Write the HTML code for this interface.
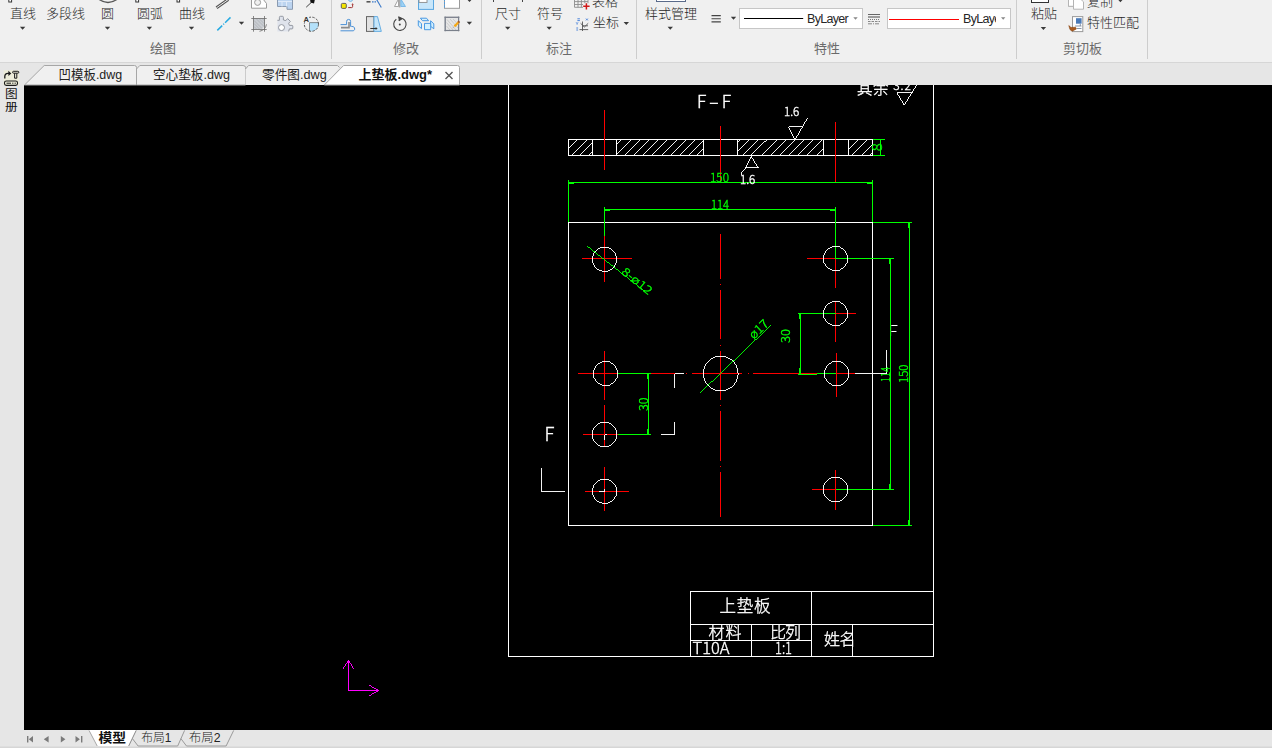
<!DOCTYPE html>
<html lang="zh-CN">
<head>
<meta charset="utf-8">
<title>上垫板.dwg</title>
<style>
html,body{margin:0;padding:0;}
body{width:1272px;height:748px;overflow:hidden;position:relative;background:#e6e6e6;
 font-family:"Liberation Sans","Noto Sans CJK SC",sans-serif;font-size:13px;color:#1e1e1e;}
#ribbon{position:absolute;left:0;top:0;width:1272px;height:62px;background:#f0f0f0;border-bottom:1px solid #d6d6d6;}
.t{position:absolute;white-space:nowrap;line-height:16px;height:16px;font-size:13px;color:#262626;font-weight:300;}
.lbl{position:absolute;white-space:nowrap;line-height:16px;height:16px;font-size:13px;color:#6a6a6a;}
.sep{position:absolute;top:0;width:1px;height:59px;background:#cdcdcd;}
.ar{position:absolute;width:0;height:0;border-left:2.6px solid transparent;border-right:2.6px solid transparent;border-top:3px solid #3a3a3a;}
.combo{position:absolute;top:8px;height:19px;background:#fff;border:1px solid #c6c6c6;}
#tabbar{position:absolute;left:0;top:63px;width:1272px;height:22px;background:#e6e6e6;}
#canvas{position:absolute;left:24px;top:85px;width:1248px;height:645px;background:#000;overflow:hidden;}
#left{position:absolute;left:0;top:85px;width:24px;height:645px;background:#e6e6e6;}
#bottom{position:absolute;left:0;top:730px;width:1272px;height:18px;background:#e6e6e6;}
#ov{position:absolute;left:0;top:0;width:1272px;height:748px;}
</style>
</head>
<body>
<div id="ribbon">
 <!-- draw panel -->
 <div class="t" style="left:10px;top:6px">直线</div>
 <div class="t" style="left:46px;top:6px">多段线</div>
 <div class="t" style="left:101px;top:6px">圆</div>
 <div class="t" style="left:137px;top:6px">圆弧</div>
 <div class="t" style="left:179px;top:6px">曲线</div>
 
 <div class="lbl" style="left:150px;top:41px">绘图</div>
 <div class="sep" style="left:331px"></div>
 <!-- modify panel -->
 
 <div class="lbl" style="left:393px;top:41px">修改</div>
 <div class="sep" style="left:481px"></div>
 <!-- annotate panel -->
 <div class="t" style="left:495px;top:6px">尺寸</div>
 <div class="t" style="left:537px;top:6px">符号</div>
 <div class="t" style="left:592px;top:-6.5px">表格</div>
 <div class="t" style="left:593px;top:15px">坐标</div>
 <div class="lbl" style="left:546px;top:41px">标注</div>
 <div class="sep" style="left:636px"></div>
 <!-- properties panel -->
 <div class="t" style="left:645px;top:6px">样式管理</div>
 
 <div class="combo" style="left:739px;width:122px"></div>
 <div class="t" style="left:807px;top:11px;font-size:12.5px;letter-spacing:-0.68px;font-weight:400">ByLayer</div>
 <div class="combo" style="left:887px;width:122px"></div>
 <div class="t" style="left:963px;top:11px;font-size:12.5px;letter-spacing:-0.68px;font-weight:400;width:32.5px;overflow:hidden">ByLayer</div>
 <div class="lbl" style="left:814px;top:41px">特性</div>
 <div class="sep" style="left:1016px"></div>
 <!-- clipboard panel -->
 <div class="t" style="left:1031px;top:6px">粘贴</div>
 <div class="t" style="left:1087px;top:-6.5px">复制</div>
 <div class="t" style="left:1087px;top:15px">特性匹配</div>
 <div class="lbl" style="left:1063px;top:41px">剪切板</div>
 <div class="sep" style="left:1147px"></div>
</div>
<div id="tabbar"></div>
<div id="left"></div>
<div id="canvas"></div>
<div id="bottom"></div>
<svg id="ov" width="1272" height="748" viewBox="0 0 1272 748">
<!--ICONS-->
<g fill="none" stroke-linecap="butt">
 <!-- draw panel: big icon stubs at top -->
 <rect x="8.8" y="-3" width="2.8" height="5" fill="#fff" stroke="#333" stroke-width="1"/>
 <path d="M98.5,-1 Q108,6 117.5,-1" stroke="#555" stroke-width="1.3"/>
 <rect x="135.8" y="-3" width="2.8" height="5" fill="#fff" stroke="#333" stroke-width="1"/>
 <rect x="177" y="-3" width="2.6" height="5" fill="#fff" stroke="#333" stroke-width="1"/>
 <!-- double line -->
 <path d="M216.5,7.8 L228.2,-0.5" stroke="#555" stroke-width="3"/>
 <path d="M216.5,7.8 L228.2,-0.5" stroke="#f0f0f0" stroke-width="1"/>
 <!-- blue dash-dot line -->
 <path d="M217.3,30.4 L222.2,25.6 M223.3,24.5 L224,23.8 M225.1,22.7 L230.5,17.4" stroke="#29abe2" stroke-width="1.5"/>
 <!-- top row icons (clipped) -->
 <path d="M251.5,-1 V8.2 H266.5 V3.5 L263,-1 Z" fill="#fff" stroke="#9a9a9a" stroke-width="1"/>
 <circle cx="257.6" cy="2.4" r="3" fill="#f0f0f0" stroke="#9a9a9a" stroke-width="1"/>
 <path d="M277.5,-1 V6.5 H287 V9.3 H292.5 V-1 Z" fill="#bcd4f0" stroke="#8a9ab0" stroke-width="1"/>
 <path d="M278,1.5 H292 M282,2 V6.5 M286.5,2 V6.5" stroke="#e8f0fb" stroke-width="0.8"/>
 <path d="M306.2,7.2 L312,1.8" stroke="#444" stroke-width="1"/>
 <path d="M310,-1 L315,-1 L314,3.5 L310.5,2.5 Z" fill="#111" stroke="none"/>
 <!-- hatch icon -->
 <path d="M253.5,18.2 H264.5 V24.5 Q264,29 259.5,29.5 H253.5 Z" fill="#c9cdd2" stroke="none"/>
 <path d="M254,20.5 L262,28.5 M254,23.5 L259.5,29 M254,26.5 L256.5,29 M256,18.5 L264,26.5 M259,18.5 L264.3,23.8 M262,18.5 L264.3,20.8" stroke="#a9adb3" stroke-width="0.7"/>
 <path d="M251.3,18.5 H266.7 M251.3,29.5 H266.7 M253.5,16 V31.7 M264.5,16 V31.7" stroke="#6a6a6a" stroke-width="0.8"/>
 <path d="M259.5,31.3 Q265.5,30 266.5,24.3" stroke="#777" stroke-width="0.9"/>
 <!-- gear / region icon -->
 <path d="M277.4,31.4 V20.3 H279.4 V17.3 Q279.4,16.3 280.4,16.3 H282.4 Q283.4,16.3 283.4,17.3 V20 L285.8,20.6 L287.6,18.6 L290.4,21.4 L288.6,23.2 L289.4,25.4 H292 Q292.8,25.4 292.8,26.2 V28.1 Q292.8,28.9 292,28.9 H289.4 L288.6,31.4 Z" fill="#dfe3ec" stroke="none"/>
 <path d="M277.4,20.3 H279.4 V17.3 Q279.4,16.3 280.4,16.3 H282.4 Q283.4,16.3 283.4,17.3 V20 L285.8,20.6 L287.6,18.6 L290.4,21.4 L288.6,23.2 L289.4,25.4 H292 Q292.8,25.4 292.8,26.2 V28.1 Q292.8,28.9 292,28.9 H289.4 L288.6,31.4" stroke="#8a8e98" stroke-width="0.9"/>
 <circle cx="281.5" cy="27.6" r="3" fill="#fff" stroke="#8a8e98" stroke-width="0.9"/>
 <!-- A circle icon -->
 <path d="M309.5,22.6 H318.4 A7.2,7.2 0 0 1 309.5,31.1 Z" fill="#b4e1fa" stroke="none"/>
 <path d="M309.5,31.1 V22.6 H318.4" stroke="#666" stroke-width="0.7"/>
 <circle cx="311.4" cy="24.2" r="7.1" stroke="#444" stroke-width="0.9" stroke-dasharray="2.4 1.4"/>
 <rect x="303.5" y="16.6" width="5.6" height="5.6" fill="#f0f0f0" stroke="none"/>
 <text x="303.6" y="21.7" font-size="7.6" font-weight="bold" fill="#333" stroke="none" style="font-family:'Liberation Sans',sans-serif">A</text>
 <!-- modify panel top row -->
 <rect x="341.3" y="3.4" width="5" height="5" rx="1.2" fill="#f5e600" stroke="#555" stroke-width="0.9"/>
 <path d="M347.5,-1 Q350.5,4 353.5,-1" fill="#bfe3f8" stroke="#6aaee0" stroke-width="0.8"/>
 <path d="M348.2,7.6 H351.6 Q352.6,7.6 352.6,6.6 V4.6" stroke="#a03030" stroke-width="1"/>
 <path d="M351.4,4.8 L352.6,3.2 L353.8,4.8 Z" fill="#a03030"/>
 <path d="M366.5,1.8 H370.5" stroke="#555" stroke-width="1.6"/>
 <path d="M372,1.8 H376" stroke="#3a78c8" stroke-width="1.2" stroke-dasharray="1.6 0.9"/>
 <path d="M376.6,-0.5 L381.3,7.5" stroke="#3a78c8" stroke-width="1.1"/>
 <path d="M394.5,6.5 L398.5,-1 V6.5 Z" fill="#fff" stroke="#9a9a9a" stroke-width="0.9"/>
 <path d="M399.6,-1 V7.5" stroke="#aaa" stroke-width="1.6"/>
 <path d="M400.8,-1 L405.5,6.5 H400.8 Z" fill="#9ed2f4" stroke="#6ab0e6" stroke-width="0.8"/>
 <rect x="418.5" y="-2" width="15" height="11.4" fill="#c8e6fa" stroke="#5aa7e0" stroke-width="1"/>
 <rect x="419" y="-2" width="8" height="4.4" fill="#fff" stroke="#8a8a8a" stroke-width="0.9"/>
 <rect x="444.5" y="-2" width="15" height="10.3" fill="#fff" stroke="#9a9a9a" stroke-width="1"/>
 <path d="M444.5,-1 V8" stroke="#4a9ae0" stroke-width="1" stroke-dasharray="2 1.2"/>
 <!-- modify panel bottom row -->
 <path d="M340.5,30.8 H353.5 Q355.6,29.4 354.3,27.4 Q353.5,26.4 351.5,26.4 H350.6 V21.5 Q350.6,19.4 348.6,19.4 Q346.6,19.4 346.6,21.5 V24.6 H340.5" stroke="#4a90d6" stroke-width="1"/>
 <path d="M341,27.6 H349 V22" stroke="#8a8a8a" stroke-width="1.6"/>
 <rect x="366.5" y="16.6" width="7.5" height="14.8" fill="#e2e2e2" stroke="#666" stroke-width="1"/>
 <path d="M374,16.6 H377.5 L381.3,31.4 H374 Z" fill="#c6e6fa" stroke="#5aa7e0" stroke-width="0.9"/>
 <path d="M370.3,28.5 H376" stroke="#333" stroke-width="1"/>
 <path d="M375.6,27 L377.6,28.5 L375.6,30 Z" fill="#333"/>
 <path d="M402.5,18.6 A6.2,6.2 0 1 1 396.3,19.2" stroke="#444" stroke-width="1.1"/>
 <path d="M398.3,16.8 L402.2,18.6 L398.8,20.8" stroke="#444" stroke-width="1.1" fill="#444"/>
 <circle cx="399.8" cy="24.4" r="1" fill="#444"/>
 <g fill="#d2f0ff" stroke="#3a8fe0" stroke-width="0.9" stroke-linejoin="round">
  <path d="M420.4,18.2 H426.5 L428.6,20.7 H422.5 Z"/>
  <path d="M418.3,20.6 L421.5,23.8 V28.6 L418.3,25.8 Z"/>
  <path d="M430.6,20.8 L433.8,23.8 V28.8 L430.6,26.3 Z"/>
  <path d="M424.5,23.4 H430.7 V29.7 H424.5 Z"/>
 </g>
 <rect x="445.2" y="17.3" width="13.4" height="13.2" fill="#e6e6e6" stroke="none"/>
 <path d="M447,19.5 L456,30 M450,19 L458,28 M453,19 L458,24.5 M446.5,22.5 L453,30 M446.5,26 L450,30" stroke="#c4c4c4" stroke-width="0.8"/>
 <rect x="445.2" y="17.3" width="13.4" height="13.2" stroke="#7a808c" stroke-width="1.2"/>
 <path d="M444.2,17.3 H459.6 M444.2,30.5 H459.6 M445.2,16.3 V31.5 M458.6,16.3 V31.5" stroke="#7a808c" stroke-width="0.6"/>
 <path d="M454.4,26.4 L458.6,22.2" stroke="#f5a814" stroke-width="2.2"/>
 <path d="M458,21.2 L459.6,22.6" stroke="#a0582a" stroke-width="1.6"/>
 <path d="M452.4,28.4 L454.2,27.6 L453.2,26.6 Z" fill="#b0b0b0"/>
 <path d="M493.5,-1 V2 M522.5,-1 V2" stroke="#444" stroke-width="1"/>
 <!-- annotate: table icon and coord icon -->
 <path d="M574.5,-1 V7.3 H588 V-1 M574.5,1.6 H588 M574.5,4.5 H588 M578,-1 V7.3 M581.4,-1 V7.3 M584.8,-1 V7.3" stroke="#8c8c8c" stroke-width="0.9"/>
 <rect x="583" y="3.2" width="6.6" height="6.4" fill="#f0f0f0" stroke="none"/>
 <path d="M583.2,6.3 H589.6 M586.4,3.2 V9.5" stroke="#d01818" stroke-width="1.5"/>
 <path d="M582.5,21.5 V31 M579.5,29.6 H588.2 M582.5,25.8 H588 M580.6,23.3 L584.4,27 L588.2,23.3" stroke="#555" stroke-width="0.9"/>
 <path d="M586,18.6 l1.8,1.8 m0,-1.8 l-1.8,1.8 M577.4,18.8 h2.5 M577.4,20.6 h2.5 M576.2,22.4 l0.9,1 l0.9,-1 M577.1,23.4 v1.2 M576.3,28 h1.8 M576.3,30 h1.8" stroke="#3a78d8" stroke-width="0.9"/>
 <!-- style manager top icon -->
 <rect x="656.5" y="-3" width="29" height="4.5" fill="#fff" stroke="#5a6a8a" stroke-width="1"/>
 <!-- list icon -->
 <path d="M711.5,15.6 H720.8 M711.5,18.7 H720.8 M711.5,21.8 H720.8" stroke="#444" stroke-width="1.15"/>
 <!-- combo lines -->
 <path d="M744,18.5 H803.2" stroke="#000" stroke-width="1"/>
 <path d="M889,19.5 H959" stroke="#ff0000" stroke-width="1"/>
 <!-- linetype icon -->
 <path d="M868,14.5 H880" stroke="#666" stroke-width="1"/>
 <path d="M868,17 H880" stroke="#777" stroke-width="1.4"/>
 <path d="M868,19.5 H880" stroke="#777" stroke-width="1" stroke-dasharray="1 1"/>
 <path d="M868,21.5 H880" stroke="#888" stroke-width="1" stroke-dasharray="2.5 1"/>
 <path d="M868,23.8 H880" stroke="#888" stroke-width="1" stroke-dasharray="4 1 1 1"/>
 <!-- clipboard: paste icon, copy icon, match icon -->
 <rect x="1031.5" y="-3" width="17" height="5.5" fill="#fff" stroke="#333" stroke-width="1"/>
 <path d="M1068.5,-1 V6.3 H1074" stroke="#b0b0b0" stroke-width="1" fill="#fff"/>
 <path d="M1068.5,-1 H1077 V6.3 H1068.5 Z" fill="#fff" stroke="#b4b4b4" stroke-width="1"/>
 <path d="M1073.5,-1 H1080.5 L1083.5,1.8 V9.2 H1073.5 Z" fill="#fff" stroke="#b4b4b4" stroke-width="1"/>
 <rect x="1072.5" y="16.6" width="10.3" height="15" fill="#fff" stroke="#9a9a9a" stroke-width="1"/>
 <rect x="1076" y="18.2" width="5.6" height="5.5" fill="#4a7ab8"/>
 <path d="M1075,26 H1081.5 M1077,28.5 H1081.5 M1080.3,24 V26" stroke="#7a8aa0" stroke-width="0.9"/>
 <path d="M1068.8,25.6 L1071,27.5 L1075.5,27.2 L1076.4,29 L1072,31.2 L1070,29.6 Z" fill="#a85a1e" stroke="#8a4410" stroke-width="0.6"/>
 <path d="M19.9,26.8 h5.4 l-2.7,3 Z M104.8,26.8 h5.4 l-2.7,3 Z M146.7,26.8 h5.4 l-2.7,3 Z M188.8,26.8 h5.4 l-2.7,3 Z M238.8,21.8 h5.4 l-2.7,3 Z M466.7,21.8 h5.4 l-2.7,3 Z M466.8,-0.9 h5.4 l-2.7,3 Z M505.0,26.8 h5.4 l-2.7,3 Z M546.5,26.8 h5.4 l-2.7,3 Z M623.6,22.0 h5.4 l-2.7,3 Z M667.6,26.8 h5.4 l-2.7,3 Z M730.8,16.7 h5.4 l-2.7,3 Z M1040.7,26.9 h5.4 l-2.7,3 Z M1117.7,-0.7 h5.4 l-2.7,3 Z" fill="#3a3a3a" stroke="none"/>
 <path d="M853.3,17.3 h4.4 l-2.2,2.4 Z M1001.0,17.3 h4.4 l-2.2,2.4 Z" fill="#888" stroke="none"/>
</g>
<!--/ICONS-->
<!--TABS-->
<g font-size="13" style="font-family:'Liberation Sans','Noto Sans CJK SC',sans-serif">
 <!-- document tabs -->
 <path d="M24.5,85 L44.2,65.5 H134.5 Q136.5,65.5 136.5,67.5 V85 Z" fill="#f0f0f0" stroke="#a6a6a6"/>
 <path d="M136.5,69 L139.8,65.5 H243 Q245.5,65.5 245.5,67.5 V85 H136.5 Z" fill="#f0f0f0" stroke="#a6a6a6"/>
 <path d="M245.5,69 L248.5,65.5 H337.5 L339.5,67.5 L334,74 V85 H245.5 Z" fill="#f0f0f0" stroke="none"/>
 <path d="M245.5,69 L248.5,65.5 H337.5 L339.5,67.5" fill="none" stroke="#a6a6a6"/>
 <path d="M324.3,85 L343.6,65.5 H457.5 Q459.5,65.5 459.5,67.5 V85 Z" fill="#fff" stroke="#a6a6a6"/>
 <text x="58.5" y="78.7" fill="#222" textLength="63.7" lengthAdjust="spacingAndGlyphs">凹模板.dwg</text>
 <text x="153" y="78.7" fill="#222" textLength="77" lengthAdjust="spacingAndGlyphs">空心垫板.dwg</text>
 <text x="262" y="78.7" fill="#222" textLength="64.8" lengthAdjust="spacingAndGlyphs">零件图.dwg</text>
 <text x="358.5" y="78.7" fill="#111" font-weight="bold" textLength="73.5" lengthAdjust="spacingAndGlyphs">上垫板.dwg*</text>
 <path d="M445.5,72 L452.5,79 M452.5,72 L445.5,79" stroke="#555" stroke-width="1.4" fill="none"/>
 <!-- pin icon / side -->
 <rect x="3.6" y="70.3" width="15.5" height="15.1" fill="#ececd8"/>
 <path d="M4.8,78.6 V76.6 Q4.8,73.4 8,73.4 H9" fill="none" stroke="#1a1a1a" stroke-width="1.3"/>
 <path d="M8.4,70.7 L11.3,73.4 L8.4,76.1 Z" fill="#1a1a1a"/>
 <rect x="12.6" y="71.3" width="6.2" height="1.9" rx="0.95" fill="none" stroke="#1a1a1a" stroke-width="1"/>
 <path d="M14.6,73.4 V78.2 H16.8 V73.4" fill="none" stroke="#1a1a1a" stroke-width="1"/>
 <rect x="4.5" y="81" width="13" height="4.4" rx="1.8" fill="none" stroke="#1a1a1a" stroke-width="1.1"/>
 <path d="M6.5,83.2 H11 M12.2,83.2 H13.4 M14.6,83.2 H15.8" stroke="#1a1a1a" stroke-width="1" fill="none"/>
 <text transform="translate(4.9,98.2) scale(1.06,0.92)" font-size="12" fill="#111">图</text>
 <text transform="translate(4.9,110.5) scale(1.06,0.92)" font-size="12" fill="#111">册</text>
</g>
<!--/TABS-->
<!--BOTTOM-->
<g font-size="12" style="font-family:'Liberation Sans','Noto Sans CJK SC',sans-serif">
 <rect x="0" y="746.5" width="1272" height="1.5" fill="#d6d6d6"/>
 <!-- nav arrows -->
 <g fill="#7a7a7a" stroke="none">
  <path d="M27,736 h1.4 v6.4 h-1.4 Z M33,736 v6.4 l-4.2,-3.2 Z"/>
  <path d="M48.6,736 v6.4 l-4.8,-3.2 Z"/>
  <path d="M60.8,736 v6.4 l4.6,-3.2 Z"/>
  <path d="M75.5,736 v6.4 l4.4,-3.2 Z M81,736 h1.4 v6.4 h-1.4 Z"/>
 </g>
 <!-- layout tabs -->
 <path d="M132.4,738.6 L138.1,746 H177.7 L184.6,730.4 M180.9,738.6 L186.5,746 H226.1 L233.7,730.4" fill="none" stroke="#9a9a9a"/>
 <path d="M89,730 L97.2,746 H128.7 L136.2,730 Z" fill="#fff" stroke="none"/>
 <path d="M89,730.4 L97.2,746" fill="none" stroke="#a8a8a8"/>
 <path d="M128.7,746 L136.2,730.4" fill="none" stroke="#8a8a8a"/>
 <text x="98.5" y="742" fill="#111" font-weight="bold" font-size="13" textLength="27.6" lengthAdjust="spacingAndGlyphs">模型</text>
 <text x="141.2" y="741.6" fill="#222" font-weight="300" textLength="30.2" lengthAdjust="spacingAndGlyphs">布局1</text>
 <text x="189" y="741.6" fill="#222" font-weight="300" textLength="31.5" lengthAdjust="spacingAndGlyphs">布局2</text>
</g>
<!--/BOTTOM-->
</svg>
<svg id="cv2" width="1272" height="748" viewBox="0 0 1272 748" style="position:absolute;left:0;top:0;will-change:transform">
<!--DRAWING-->
<defs>
 <clipPath id="hc0"><rect x="568.5" y="139.5" width="24.0" height="16"/></clipPath><clipPath id="hc1"><rect x="616.5" y="139.5" width="87.0" height="16"/></clipPath><clipPath id="hc2"><rect x="737.5" y="139.5" width="86.0" height="16"/></clipPath><clipPath id="hc3"><rect x="848.5" y="139.5" width="24.0" height="16"/></clipPath>
 <clipPath id="fc"><rect x="891.3" y="320" width="12" height="16"/></clipPath>
 <clipPath id="cv"><rect x="24" y="85" width="1248" height="645"/></clipPath>
</defs>
<g clip-path="url(#cv)" fill="none" stroke-width="1" shape-rendering="crispEdges">
 <!-- frame -->
 <g stroke="#fff">
  <path d="M508.5,80 V656.5 H933.5 V80"/>
  <!-- title block -->
  <path d="M690.5,656.5 V591.5 H933.5 M811.5,591.5 V656.5 M690.5,624.5 H933.5 M690.5,640.5 H811.5 M751.5,624.5 V656.5 M852.5,624.5 V656.5"/>
  <!-- section -->
  <rect x="568.5" y="139.5" width="304" height="16"/>
  <path d="M592.5,139.5 V155.5 M616.5,139.5 V155.5 M703.5,139.5 V155.5 M737.5,139.5 V155.5 M823.5,139.5 V155.5 M848.5,139.5 V155.5"/>
  <!-- plate -->
  <rect x="568.5" y="222.5" width="304" height="303"/>
 </g>
 <g clip-path="url(#hc0)"><path d="M560.9,155.5 l16,-16 M570.1,155.5 l16,-16 M579.3,155.5 l16,-16 M588.5,155.5 l16,-16" stroke="#fff" stroke-width="0.95" fill="none"/></g>
 <g clip-path="url(#hc1)"><path d="M604.9,155.5 l16,-16 M614.1,155.5 l16,-16 M623.3,155.5 l16,-16 M632.5,155.5 l16,-16 M641.7,155.5 l16,-16 M650.8,155.5 l16,-16 M660.0,155.5 l16,-16 M669.2,155.5 l16,-16 M678.4,155.5 l16,-16 M687.6,155.5 l16,-16 M696.7,155.5 l16,-16" stroke="#fff" stroke-width="0.95" fill="none"/></g>
 <g clip-path="url(#hc2)"><path d="M723.2,155.5 l16,-16 M732.4,155.5 l16,-16 M741.6,155.5 l16,-16 M750.8,155.5 l16,-16 M760.0,155.5 l16,-16 M769.1,155.5 l16,-16 M778.3,155.5 l16,-16 M787.5,155.5 l16,-16 M796.7,155.5 l16,-16 M805.9,155.5 l16,-16 M815.0,155.5 l16,-16" stroke="#fff" stroke-width="0.95" fill="none"/></g>
 <g clip-path="url(#hc3)"><path d="M841.6,155.5 l16,-16 M850.8,155.5 l16,-16 M860.0,155.5 l16,-16 M869.2,155.5 l16,-16" stroke="#fff" stroke-width="0.95" fill="none"/></g>
 <!-- red center lines -->
 <g stroke="#ff0000">
  <path d="M604.5,110 V170 M720.5,126 V182 M835.5,122 V182"/>
  <path d="M720.5,234 V279 M720.5,284 V285 M720.5,290 V339 M720.5,345 V346 M720.5,351 V400 M720.5,405 V406 M720.5,411 V461 M720.5,466 V467 M720.5,472 V517"/>
  <path d="M578,373.5 H680 M686,373.5 H687 M692,373.5 H741.5 M747.5,373.5 H748.5 M752.5,373.5 H855"/>
  <!-- hole crosses -->
  <path d="M582,258.5 H632 M604.5,236 V282"/>
  <path d="M807,258.5 H836 M835.5,258.5 V288"/>
  <path d="M835.5,313.5 H856 M835.5,300.5 V342"/>
  <path d="M604.5,351 V400 M604.5,405 V447"/>
  <path d="M836.5,353 V396.5"/>
  <path d="M583,434.5 H618"/>
  <path d="M585,491.5 H629 M604.5,467 V511"/>
  <path d="M812,489.5 H836 M835.5,470 V510"/>
 </g>
 <text x="888" y="339" font-size="18.5" fill="#fff" stroke="none" clip-path="url(#fc)" style="font-family:'Noto Sans CJK SC','Liberation Sans',sans-serif;font-weight:300">F</text>
 <!-- green dims -->
 <g stroke="#00ff00">
  <path d="M568.5,180 V222 M872.5,180 V222 M568.5,182.5 H872.5 M568.5,183.5 H574 M867,183.5 H872.5"/>
  <path d="M604.5,207 V236 M835.5,207 V258.5 M604.5,209.5 H835.5 M604.5,210.5 H610 M830,210.5 H835.5"/>
  <path d="M873,139.5 H885 M873,155.5 H885 M880.5,139.5 V155.5"/>
  <path d="M872.5,222.5 H912 M872.5,525.5 H912 M909.5,222.5 V525.5 M908.5,222.5 V228 M908.5,520 V525.5"/>
  <path d="M835.5,258.5 H894 M835.5,489.5 H894 M890.5,258.5 V489.5 M889.5,258.5 V264 M889.5,484 V489.5"/>
  <path d="M797.5,313.5 H835.5 M800.5,313.5 V373.5 M799.5,313.5 V319 M799.5,368 V373.5 M798,374.5 H817 M817,373.5 H836"/>
  <path d="M618,373.5 H651 M618,434.5 H651 M648.5,373.5 V434.5 M647.5,373.5 V379 M647.5,429 V434.5"/>
  <path d="M587,246 L645,291.4" stroke-width="0.95"/>
  <path d="M700.4,392.6 L771,325.2" stroke-width="0.95"/>
 </g>
<!-- white circles and marks -->
 <g stroke="#fff" stroke-width="0.95">
  <circle cx="604.5" cy="259.3" r="12.2"/>
  <circle cx="835.5" cy="258.5" r="12.2"/>
  <circle cx="835.5" cy="313.5" r="12.2"/>
  <circle cx="605.5" cy="373.5" r="12.2"/>
  <circle cx="720.7" cy="373.5" r="17.4"/>
  <circle cx="836.6" cy="373.5" r="12.3"/>
  <circle cx="604.5" cy="434.5" r="12.3"/>
  <circle cx="604.6" cy="491.3" r="12.3"/>
  <circle cx="835.5" cy="489.5" r="12.3"/>
  <path d="M855,373.5 H886.5 V350"/>
  <path d="M684,373.5 H674.5 V388"/>
  <path d="M661,434.5 H674.5 V422"/>
  <path d="M541.5,468 V491.5 H565"/>
  <path d="M604.5,440 V434.5 H607"/>
  <path d="M599,491.5 H604.5 V489"/>
  <!-- roughness symbols -->
  <path d="M788.5,126.5 L795.3,139.3 L807.5,118 M788.5,126.5 H801.5"/>
  <path d="M751.3,155.5 L758.5,167.5 H745 L751.3,155.5 M745,167.5 Q741.5,171 741,175"/>
  <path d="M897.3,92.5 L904.5,104.6 L917,84.5 M897.3,92.5 H912"/>
 </g>
 <!-- UCS icon -->
 <g stroke="#ff00ff" stroke-width="0.95">
  <path d="M348.5,660 V690.5 H379" stroke-width="1"/><path d="M343.2,668.8 L348.5,660.1 L353.7,668.8 M369.1,685.2 L378.7,690.5 L369.1,695.8"/>
 </g>
</g>
<g clip-path="url(#cv)" stroke="none" style="font-family:'Noto Sans CJK SC','Liberation Sans',sans-serif;font-weight:300">
 <g fill="#fff" stroke="#fff" stroke-width="0.35">
  <text x="697" y="108" font-size="17.5" textLength="34" lengthAdjust="spacing">F–F</text>
  <text x="544.6" y="440.6" font-size="18.5">F</text>
  <text x="784" y="116" font-size="11.5">1.6</text>
  <text x="740" y="183.5" font-size="11.5">1.6</text>
  <text x="857" y="93.5" font-size="15.5" textLength="31.5">其余</text>
  <text x="893.2" y="90" font-size="12" textLength="17.8" lengthAdjust="spacing">3.2</text>
  <text x="719.5" y="611.5" font-size="16.5" textLength="51" lengthAdjust="spacing">上垫板</text>
  <text x="708.5" y="638" font-size="16" textLength="33">材料</text>
  <text x="770" y="638" font-size="16" textLength="31">比列</text>
  <text x="692.5" y="653.5" font-size="16" textLength="37" lengthAdjust="spacingAndGlyphs">T10A</text>
  <text x="775" y="653.5" font-size="16" textLength="17" lengthAdjust="spacingAndGlyphs">1:1</text>
  <text x="824" y="645" font-size="16" textLength="31.5">姓名</text>
 </g>
 <g fill="#00ff00" stroke="#00ff00" stroke-width="0.35">
  <text x="710" y="181.5" font-size="12" textLength="19" lengthAdjust="spacingAndGlyphs">150</text>
  <text x="711" y="208.5" font-size="12" textLength="18" lengthAdjust="spacingAndGlyphs">114</text>
  <text transform="translate(882,151.3) rotate(-90)" font-size="12.5" textLength="8" lengthAdjust="spacingAndGlyphs">8</text>
  <text transform="translate(908,383) rotate(-90)" font-size="12" textLength="18.5" lengthAdjust="spacingAndGlyphs">150</text>
  <text transform="translate(889.5,382) rotate(-90)" font-size="12" textLength="15" lengthAdjust="spacingAndGlyphs">114</text>
  <text transform="translate(789.5,343) rotate(-90)" font-size="12" textLength="14" lengthAdjust="spacingAndGlyphs">30</text>
  <text transform="translate(647.5,411) rotate(-90)" font-size="12" textLength="13.5" lengthAdjust="spacingAndGlyphs">30</text>
  <text transform="translate(620.8,272.9) rotate(39)" font-size="11" textLength="35.5" lengthAdjust="spacingAndGlyphs">8-ø12</text>
  <text transform="translate(753.8,339.8) rotate(-43.5)" font-size="12" textLength="21.5" lengthAdjust="spacingAndGlyphs">ø17</text>
 </g>
</g>
<!--/DRAWING-->
</svg>
</body>
</html>
